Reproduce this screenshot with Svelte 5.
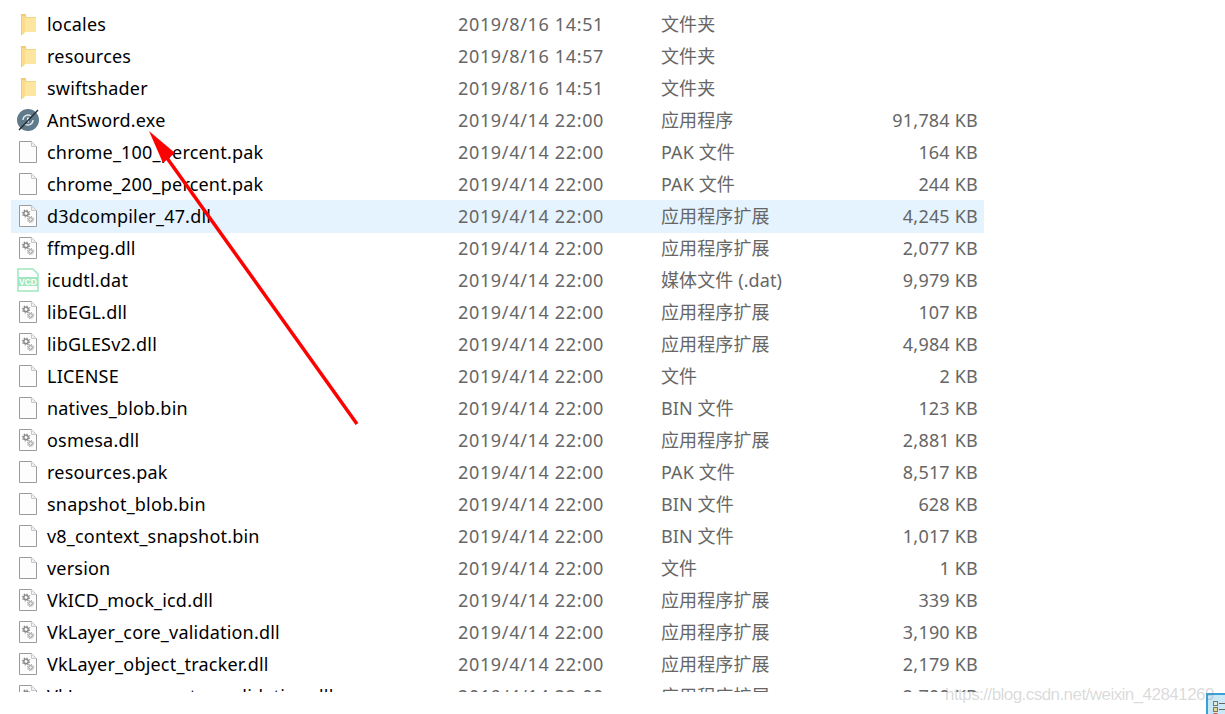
<script>
  const dll = '应用程序扩展'
  const date = '2019/4/14 22:00'
  const files = [
    { name: 'locales', date: '2019/8/16 14:51', type: '文件夹', size: '', icon: 'folder' },
    { name: 'resources', date: '2019/8/16 14:57', type: '文件夹', size: '', icon: 'folder' },
    { name: 'swiftshader', date: '2019/8/16 14:51', type: '文件夹', size: '', icon: 'folder' },
    { name: 'AntSword.exe', date, type: '应用程序', size: '91,784 KB', icon: 'exe' },
    { name: 'chrome_100_percent.pak', date, type: 'PAK 文件', size: '164 KB', icon: 'file' },
    { name: 'chrome_200_percent.pak', date, type: 'PAK 文件', size: '244 KB', icon: 'file' },
    { name: 'd3dcompiler_47.dll', date, type: dll, size: '4,245 KB', icon: 'dll', selected: true },
    { name: 'ffmpeg.dll', date, type: dll, size: '2,077 KB', icon: 'dll' },
    { name: 'icudtl.dat', date, type: '媒体文件 (.dat)', size: '9,979 KB', icon: 'vcd' },
    { name: 'libEGL.dll', date, type: dll, size: '107 KB', icon: 'dll' },
    { name: 'libGLESv2.dll', date, type: dll, size: '4,984 KB', icon: 'dll' },
    { name: 'LICENSE', date, type: '文件', size: '2 KB', icon: 'file' },
    { name: 'natives_blob.bin', date, type: 'BIN 文件', size: '123 KB', icon: 'file' },
    { name: 'osmesa.dll', date, type: dll, size: '2,881 KB', icon: 'dll' },
    { name: 'resources.pak', date, type: 'PAK 文件', size: '8,517 KB', icon: 'file' },
    { name: 'snapshot_blob.bin', date, type: 'BIN 文件', size: '628 KB', icon: 'file' },
    { name: 'v8_context_snapshot.bin', date, type: 'BIN 文件', size: '1,017 KB', icon: 'file' },
    { name: 'version', date, type: '文件', size: '1 KB', icon: 'file' },
    { name: 'VkICD_mock_icd.dll', date, type: dll, size: '339 KB', icon: 'dll' },
    { name: 'VkLayer_core_validation.dll', date, type: dll, size: '3,190 KB', icon: 'dll' },
    { name: 'VkLayer_object_tracker.dll', date, type: dll, size: '2,179 KB', icon: 'dll' },
    { name: 'VkLayer_parameter_validation.dll', date, type: dll, size: '2,700 KB', icon: 'dll' }
  ]
</script>

<div class="page">
  <div class="list">
    {#each files as f}
      <div class="row" class:selected={f.selected}>
        <span class="icon">
          {#if f.icon === 'folder'}
            <svg width="15" height="21" viewBox="0 0 15 21">
              <path d="M0 0h5v3h-1v15l-3 3H0z" fill="#f0cd72" />
              <path d="M4 3h11v15H4z" fill="#fde6a0" />
              <path d="M1 2h3v16l-3 3z" fill="#fbdc8a" />
              <path d="M4 3h11v1H4z" fill="#f2d283" />
            </svg>
          {:else if f.icon === 'exe'}
            <svg width="24" height="24" viewBox="0 0 24 24">
              <circle cx="12" cy="12" r="11" fill="#5f7b8b" />
              <path d="M7 12a5 5 0 0 1 8-4M17 12a5 5 0 0 1-8 4" fill="none" stroke="#dfe7ec" stroke-width="1.400" />
              <path d="M12 9.500v5" stroke="#dfe7ec" stroke-width="2" />
              <path d="M3 22L22 2" stroke="#25292c" stroke-width="1.300" />
            </svg>
          {:else if f.icon === 'vcd'}
            <svg width="22" height="24" viewBox="0 0 22 24">
              <path d="M1 1h15l5 5v17H1z" fill="#fff" stroke="#9fe8c0" stroke-width="1.500" />
              <rect x="1" y="9" width="20" height="9" fill="#9fe8c0" />
              <text x="11" y="16.800" class="vcd">VCD</text>
            </svg>
          {:else}
            <svg width="18" height="22" viewBox="0 0 18 22">
              <path d="M.5.500h12l5 5v16H.500z" fill="#fdfdfd" stroke="#9a9a9a" />
              <path d="M12.500.500v5h5" fill="#f0f0f0" stroke="#c8c8c8" />
              {#if f.icon === 'dll'}
                <g fill="none">
                  <circle cx="7" cy="8.500" r="2.200" stroke="#8a8a8a" stroke-width="1.500" />
                  <circle cx="7" cy="8.500" r="3.500" stroke="#8a8a8a" stroke-width="1.200" stroke-dasharray="1.300 1.450" />
                  <circle cx="11.500" cy="14.500" r="1.800" stroke="#a8a8a8" stroke-width="1.300" />
                  <circle cx="11.500" cy="14.500" r="3" stroke="#a8a8a8" stroke-width="1.100" stroke-dasharray="1.200 1.150" />
                </g>
              {/if}
            </svg>
          {/if}
        </span>
        <span class="name">{f.name}</span>
        <span class="date">{f.date}</span>
        <span class="type">{f.type}</span>
        <span class="size">{f.size}</span>
      </div>
    {/each}
  </div>

  <svg class="arrow" width="400" height="440" viewBox="0 0 400 440">
    <path d="M357 424L167 158" stroke="#ff0000" stroke-width="3.500" fill="none" />
    <path d="M149 131l26 22-12 10z" fill="#ff0000" />
  </svg>

  <div class="corner">
    <svg width="19" height="21" viewBox="0 0 19 21">
      <rect x="7.500" y="8.500" width="4" height="4" fill="#dfeedd" stroke="#777" />
      <rect x="7.500" y="14.500" width="4" height="4" fill="#e8d98a" stroke="#777" />
      <rect x="7.500" y="20" width="4" height="2" fill="#d9534f" />
      <path d="M13 10.500h6M13 16.500h6" stroke="#666" />
    </svg>
  </div>
  <div class="watermark">https://blog.csdn.net/weixin_42841269</div>
</div>

<style>
  :global(body) {
    margin: 0;
    background: #fff;
  }
  .page {
    position: relative;
    width: 1225px;
    height: 714px;
    overflow: hidden;
    font-family: "Noto Sans", "Noto Sans CJK SC", sans-serif;
    font-size: 18px;
  }
  .list {
    height: 684px;
    padding: 8px 0 0 11px;
    overflow: hidden;
  }
  .row {
    display: grid;
    grid-template-columns: 36px 411px 203px 200px 117px;
    align-items: center;
    width: 973px;
    height: 32px;
    color: #666;
  }
  .selected {
    background: #e5f3ff;
    box-shadow: 0 1px 0 #e5f3ff;
  }
  .icon {
    display: flex;
    align-items: center;
    justify-content: center;
    height: 32px;
    margin-right: 2px;
  }
  .name {
    color: #000;
    letter-spacing: 0.2px;
    white-space: nowrap;
  }
  .date {
    letter-spacing: 0.66px;
  }
  .type {
    margin-top: -2px;
    letter-spacing: 0.1px;
  }
  .size {
    letter-spacing: 0.2px;
    text-align: right;
  }
  .vcd {
    font-family: "Liberation Sans", sans-serif;
    font-size: 8.500px;
    font-weight: 700;
    fill: #fff;
    text-anchor: middle;
  }
  .arrow {
    position: absolute;
    top: 0;
    left: 0;
  }
  .watermark {
    position: absolute;
    left: 945px;
    top: 685px;
    font-family: "Liberation Sans", sans-serif;
    font-size: 17px;
    letter-spacing: -0.55px;
    color: rgba(130, 130, 130, 0.3);
    white-space: nowrap;
  }
  .corner {
    position: absolute;
    right: 0;
    bottom: 0;
    width: 19px;
    height: 21px;
    background: #cbe8f6;
    box-shadow: inset 2px 2px 0 #3aa0d8;
  }
  .corner svg {
    display: block;
  }
</style>
